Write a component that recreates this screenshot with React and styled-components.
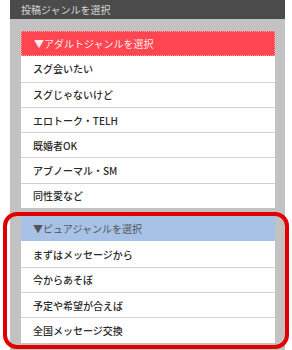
import React from "react";
import styled, { createGlobalStyle } from "styled-components";

const Global = createGlobalStyle`
  html, body { margin: 0; padding: 0; background: #fff; }
  body { font-family: "Noto Sans CJK JP", "Noto Sans", sans-serif; }
`;

const Page = styled.div`
  position: relative;
  width: 292px;
  height: 350px;
  overflow: hidden;
  padding: 0 7px 0 10px;
  box-sizing: border-box;
`;

const Panel = styled.div`
  display: flex;
  flex-direction: column;
  height: 100%;
  background: #c2c2c2;
`;

const Title = styled.div`
  height: 19px;
  background: #4b4b4b;
  color: #d6d6d6;
  font-size: 10px;
  line-height: 19px;
  padding-left: 11px;
`;

const Body = styled.div`
  display: flex;
  flex-direction: column;
  gap: 8px;
  padding: 12px 10px 0 11px;
`;

const Group = styled.div`
  display: flex;
  flex-direction: column;
  background: #fff;
`;

const GroupHead = styled.div`
  height: 25.3px;
  box-sizing: border-box;
  display: flex;
  align-items: center;
  padding-left: 12px;
  font-size: 10px;
  background: ${(p) => (p.$tone === "red" ? "#ff4550" : "#a8c2e7")};
  color: ${(p) => (p.$tone === "red" ? "#ffe9ea" : "#555")};
  border: ${(p) => (p.$tone === "red" ? "1px dotted #ff9aa0" : "none")};
`;

const Row = styled.div`
  height: 25.3px;
  box-sizing: border-box;
  display: flex;
  align-items: center;
  padding-left: 12px;
  font-size: 10px;
  font-weight: 500;
  color: #2a2a2a;
  background: #fff;
  border-top: 1px solid #d2d2d2;
  &:first-of-type { border-top: none; }
`;

const Highlight = styled.div`
  position: absolute;
  left: 3px;
  top: 212px;
  width: 286px;
  height: 137px;
  box-sizing: border-box;
  border: 4px solid #e00000;
  border-radius: 14px;
  pointer-events: none;
`;

const adult = ["スグ会いたい", "スグじゃないけど", "エロトーク・TELH", "既婚者OK", "アブノーマル・SM", "同性愛など"];
const pure = ["まずはメッセージから", "今からあそぼ", "予定や希望が合えば", "全国メッセージ交換"];

export default function App() {
  return (
    <>
      <Global />
      <Page>
        <Panel>
          <Title>投稿ジャンルを選択</Title>
          <Body>
            <Group>
              <GroupHead $tone="red">▼アダルトジャンルを選択</GroupHead>
              <div>
                {adult.map((t) => (
                  <Row key={t}>{t}</Row>
                ))}
              </div>
            </Group>
            <Group>
              <GroupHead $tone="blue">▼ピュアジャンルを選択</GroupHead>
              <div>
                {pure.map((t) => (
                  <Row key={t}>{t}</Row>
                ))}
              </div>
            </Group>
          </Body>
        </Panel>
        <Highlight />
      </Page>
    </>
  );
}
